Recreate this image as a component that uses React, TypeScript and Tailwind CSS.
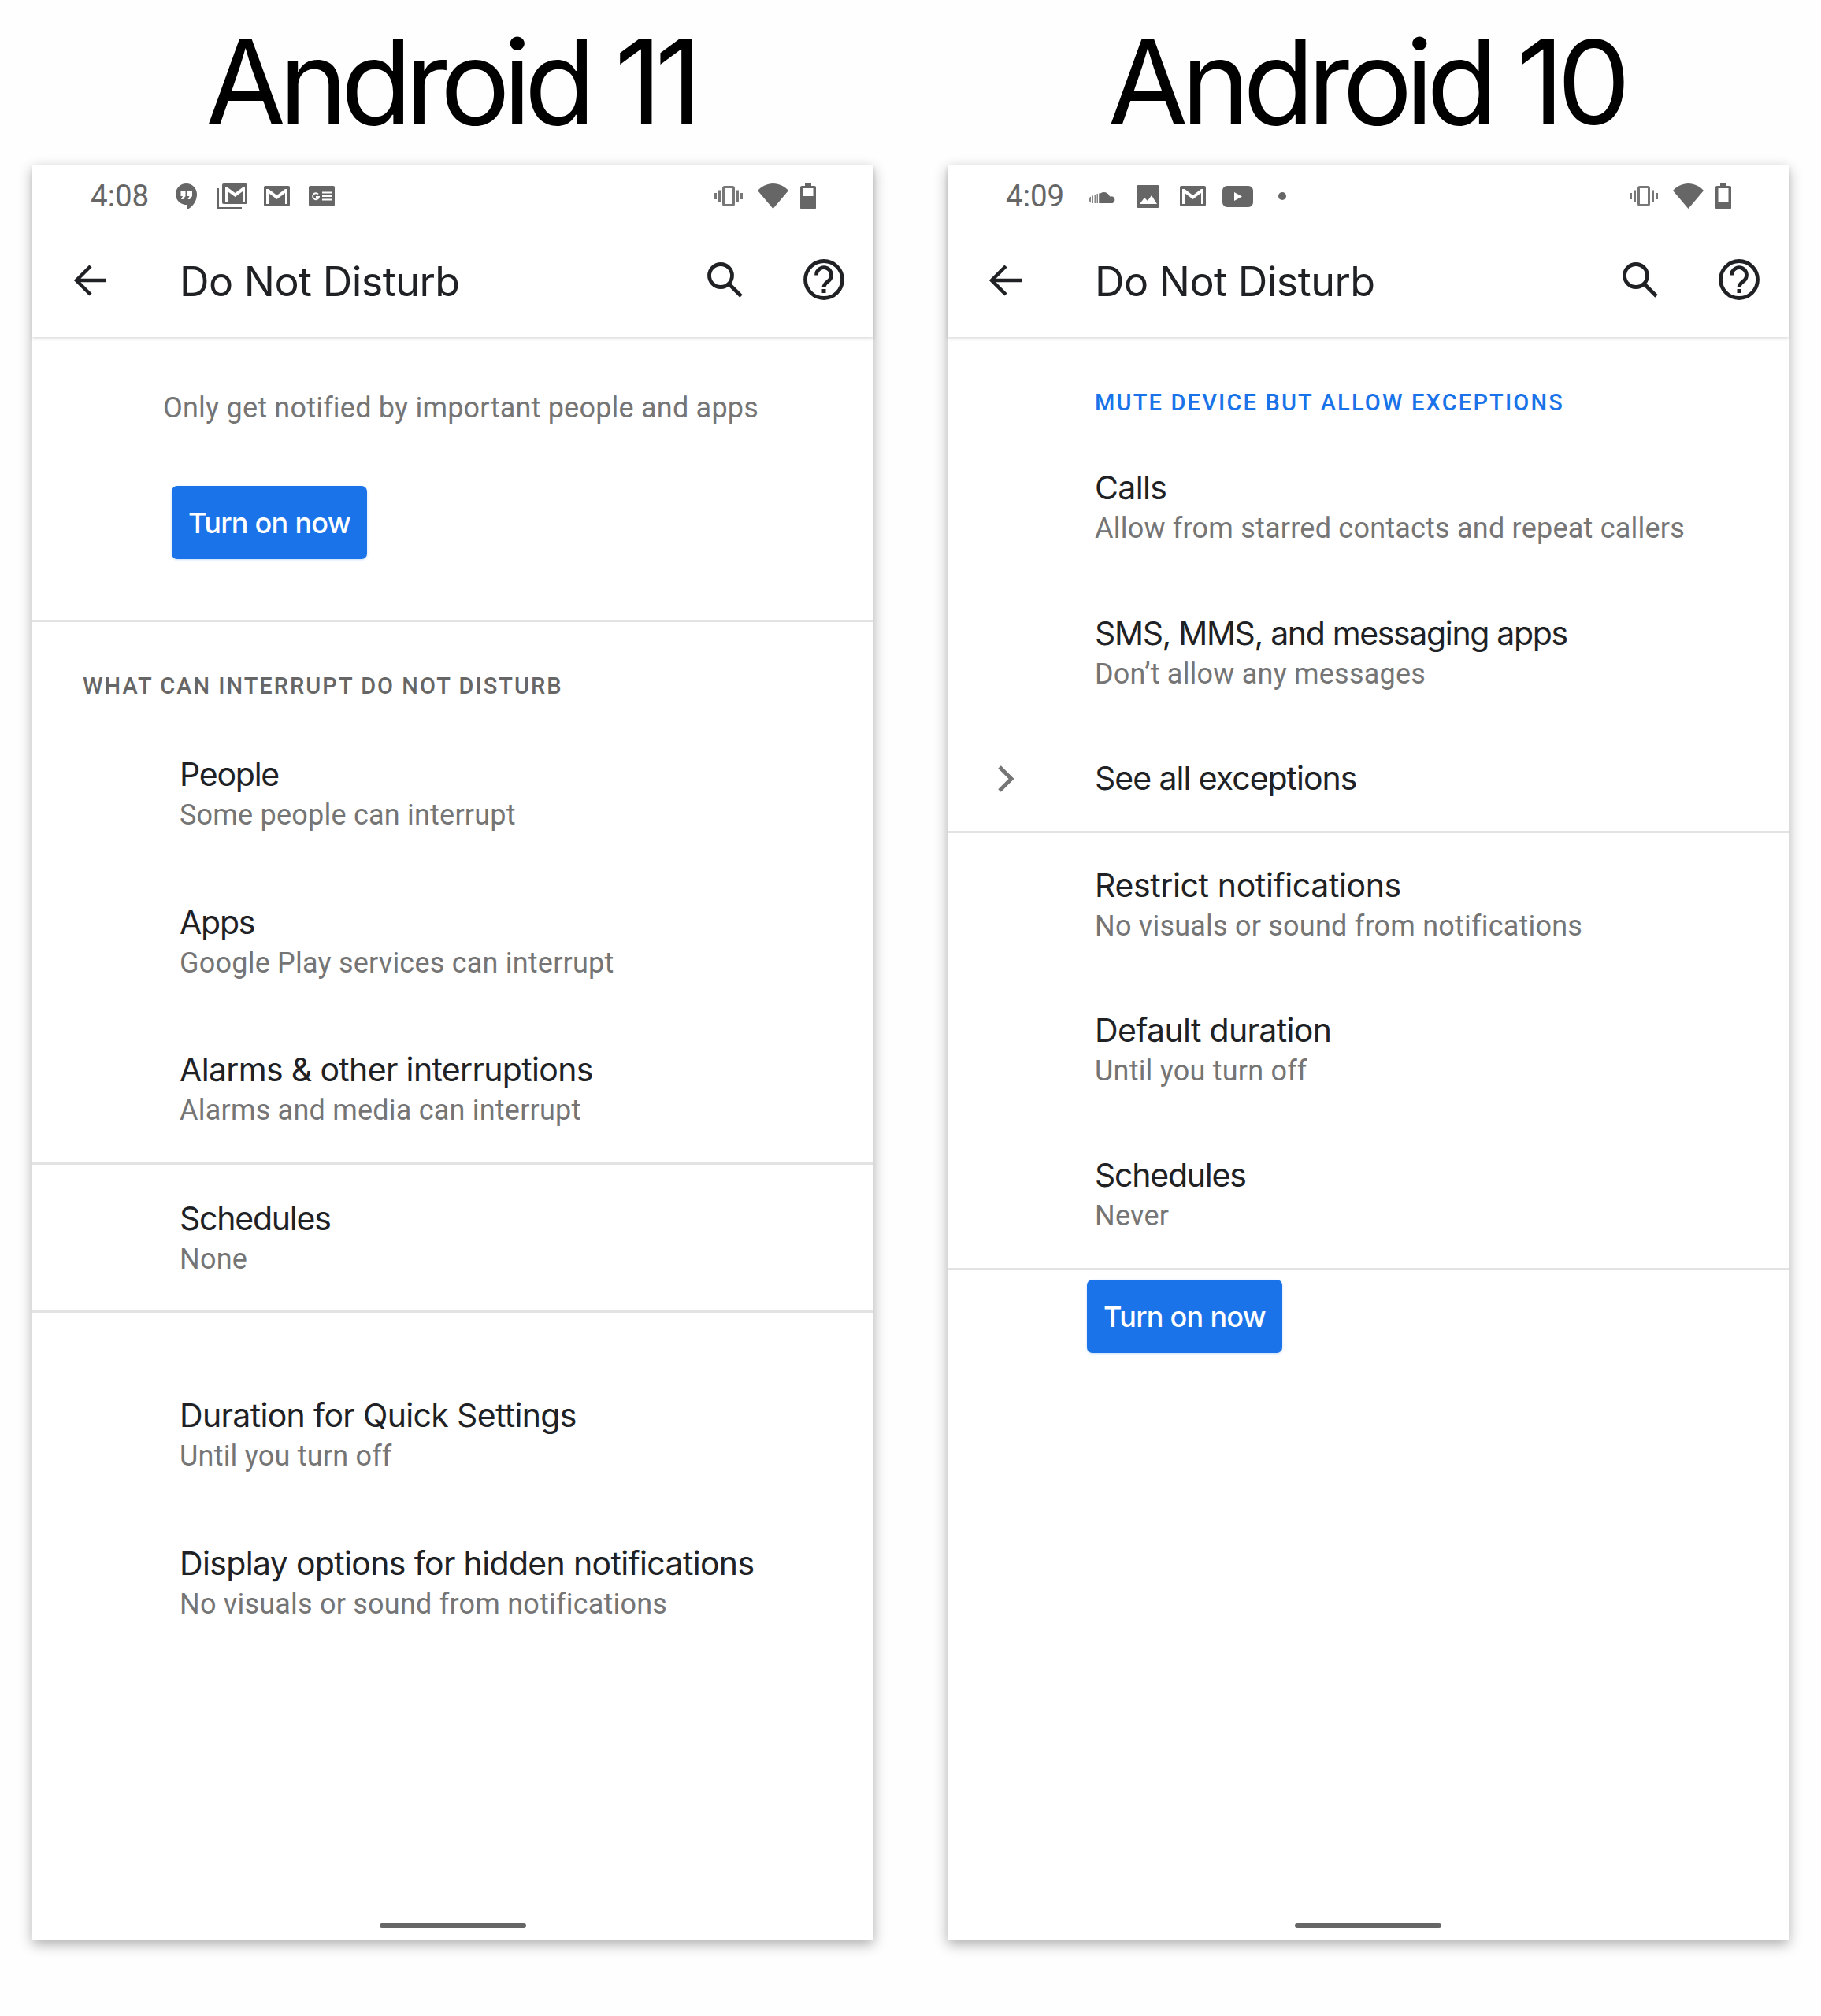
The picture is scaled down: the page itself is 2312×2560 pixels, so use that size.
const SANS = 'font-["Inter",sans-serif]';

function Hangouts() {
  return (
    <svg width="27" height="33" viewBox="0 0 27 33" fill="#666">
      <path d="M13.5 0C6 0 0 6 0 13.5S6 27 13.5 27H15v6c7-3.500 12-11 12-19.500C27 6 21 0 13.500 0z" />
      <path d="M6.500 10h6v6l-3 4H7l2-4H6.500zM15 10h6v6l-3 4h-2.500l2-4H15z" fill="#fff" />
    </svg>
  );
}

function GmailStack() {
  return (
    <svg width="39" height="33" viewBox="0 0 39 33" fill="#666">
      <path d="M0 6h3v24h29v3H2a2 2 0 0 1-2-2z" />
      <rect x="7" y="0" width="32" height="26" rx="2" />
      <path d="M11 23V5h3l9.500 7L33 5h3v18h-3V10l-9.500 7L14 10v13z" fill="#fff" />
    </svg>
  );
}

function Gmail() {
  return (
    <svg width="33" height="26" viewBox="0 0 33 26" fill="#666">
      <rect width="33" height="26" rx="2" />
      <path d="M3 23V4h3l10.500 8L27 4h3v19h-3V9l-10.500 8L6 9v14z" fill="#fff" />
    </svg>
  );
}

function GNews() {
  return (
    <svg width="33" height="26" viewBox="0 0 33 26" fill="#666">
      <rect width="33" height="26" rx="2" />
      <path d="M12 10.500a4 4 0 1 0 1 3.500H9" fill="none" stroke="#fff" strokeWidth="1.800" />
      <path d="M17 8.500h12M17 13h12M17 17.500h12" stroke="#fff" strokeWidth="2" />
    </svg>
  );
}

function SoundCloud() {
  return (
    <svg width="34" height="16" viewBox="0 0 34 16" fill="#666">
      <path d="M14 16V3.500a8 8 0 0 1 4-1.500 8.500 8.500 0 0 1 8 5.500 4.300 4.300 0 1 1 3.500 8.500z" />
      <path d="M0 10.500a3 3 0 0 1 2-3v8a3 3 0 0 1-2-3zM3.500 6.500h1.500V16H3.500zM6.500 5.500H8V16H6.500zM9.500 4h1.500v12H9.500zM12 3.500h1.200V16H12z" opacity="0.8" />
    </svg>
  );
}

function ImageIcon() {
  return (
    <svg width="29" height="29" viewBox="0 0 29 29" fill="#666">
      <rect width="29" height="29" rx="2" />
      <path d="M4 24l6-8 4 4 5-7 7 11z" fill="#fff" />
    </svg>
  );
}

function YouTube() {
  return (
    <svg width="39" height="27" viewBox="0 0 39 27" fill="#666">
      <rect width="39" height="27" rx="6" />
      <path d="M15 8l10 5.500L15 19z" fill="#fff" />
    </svg>
  );
}

function Vibrate() {
  return (
    <svg width="36" height="26" viewBox="0 0 36 26" fill="#777">
      <path d="M0 9h3v8H0zM5 5.500h3v15H5zM28 5.500h3v15h-3zM33 9h3v8h-3z" />
      <rect x="11.500" y="1.500" width="13" height="23" rx="1.500" fill="none" stroke="#777" strokeWidth="3" />
    </svg>
  );
}

function Wifi() {
  return (
    <svg width="39" height="32" viewBox="0 0 39 32" fill="#666">
      <path d="M19.500 32L0 9C5 3.500 12 0 19.500 0S34 3.500 39 9z" />
    </svg>
  );
}

function Battery({ level }: { level: number }) {
  // level = hauteur de la partie vide, en px
  return (
    <svg width="20" height="33" viewBox="0 0 20 33" fill="#666">
      <path d="M6 0h8v3h4a2 2 0 0 1 2 2v26a2 2 0 0 1-2 2H2a2 2 0 0 1-2-2V5a2 2 0 0 1 2-2h4z" />
      <rect x="3.500" y="6" width="13" height={level} fill="#fff" />
    </svg>
  );
}

function Back() {
  return (
    <svg width="42" height="42" viewBox="0 0 42 42" fill="none" stroke="#202124" strokeWidth="4.500">
      <path d="M42 21H4M22 3L4 21l18 18" />
    </svg>
  );
}

function Search() {
  return (
    <svg width="45" height="45" viewBox="0 0 45 45" fill="none" stroke="#202124" strokeWidth="4.800">
      <circle cx="17" cy="17" r="14.500" />
      <path d="M27 27l16 16" />
    </svg>
  );
}

function Help() {
  return (
    <svg width="52" height="52" viewBox="0 0 52 52" fill="none" stroke="#202124" strokeWidth="4.800">
      <circle cx="26" cy="26" r="23.500" />
      <path d="M16.500 20.500a9.500 9.500 0 1 1 15 7.500c-3 2.300-5.500 4-5.500 8" />
      <path d="M23.500 38h5v5h-5z" fill="#202124" stroke="none" />
    </svg>
  );
}

function Chevron() {
  return (
    <svg width="22" height="34" viewBox="0 0 22 34" fill="none" stroke="#757575" strokeWidth="5">
      <path d="M3 2l15 15L3 32" />
    </svg>
  );
}

function Row({ title, sub, h = 'h-[188px]', track = 'tracking-[-0.016em]' }: { title: string; sub: string; h?: string; track?: string }) {
  return (
    <div className={`${h} flex flex-col justify-center pl-[187px]`}>
      <p className={`${SANS} ${track} text-[41px] leading-[52px] text-[#202124]`}>{title}</p>
      <p className="font-['Roboto',sans-serif] text-[36px] leading-[52px] tracking-[0.006em] text-[#757575]">{sub}</p>
    </div>
  );
}

function TurnOn() {
  return (
    <button
      type="button"
      className={`${SANS} flex h-[93px] w-[248px] items-center justify-center rounded-[7px] bg-[#1a73e8] text-[36px] font-medium tracking-[-0.02em] text-white shadow-[0_1px_3px_rgba(26,115,232,0.25)]`}
    >
      Turn on now
    </button>
  );
}

function Phone({ label, time, icons, level, children }: { label: string; time: string; icons: React.ReactNode; level: number; children: React.ReactNode }) {
  return (
    <div className="flex w-[1068px] flex-col">
      <h1 className={`${SANS} flex h-[210px] items-center justify-center pr-[6px] text-[148px] leading-none tracking-[-0.06em] text-black`}>{label}</h1>
      <div className="flex h-[2254px] flex-col bg-white shadow-[0_5px_16px_rgba(0,0,0,0.32)]">
        <div className="flex h-[218px] flex-col shadow-[0_2px_4px_rgba(0,0,0,0.14)]">
          <div className="flex h-[76px] items-center pt-[2px] pl-[74px] pr-[73px]">
            <span className="w-[77px] font-['Roboto',sans-serif] text-[38.5px] text-[#666]">{time}</span>
            {icons}
            <div className="ml-auto flex items-center gap-[19px]">
              <Vibrate />
              <Wifi />
              <div className="-ml-[4px]"><Battery level={level} /></div>
            </div>
          </div>
          <div className="flex flex-1 items-center pl-[52px] pr-[37px]">
            <div className="mb-[2px]"><Back /></div>
            <span className={`${SANS} mt-[2px] ml-[93px] text-[52px] tracking-[-0.01em] text-[#202124]`}>Do Not Disturb</span>
            <div className="mb-[4px] ml-auto"><Search /></div>
            <div className="mb-[4px] ml-[77px]"><Help /></div>
          </div>
        </div>
        {children}
        <div className="mt-auto mb-[16px] h-[6px] w-[186px] self-center rounded-full bg-[#666]" />
      </div>
    </div>
  );
}

export default function App() {
  return (
    <div className="flex h-[2560px] gap-[94px] bg-[#fefefe] pl-[41px]">
      <Phone
        label="Android 11"
        time="4:08"
        level={10}
        icons={
          <div className="flex items-center">
            <div className="ml-[31px]"><Hangouts /></div>
            <div className="ml-[25px]"><GmailStack /></div>
            <div className="ml-[21px]"><Gmail /></div>
            <div className="ml-[24px]"><GNews /></div>
          </div>
        }
      >
        <div className="h-[362px] border-b-[3px] border-[#e3e3e3] pl-[166px] pt-[66px]">
          <p className="font-['Roboto',sans-serif] text-[36px] leading-[48px] tracking-[0.006em] text-[#757575]">
            Only get notified by important people and apps
          </p>
          <div className="ml-[11px] mt-[75px]"><TurnOn /></div>
        </div>
        <div className="border-b-[3px] border-[#e3e3e3]">
          <div className="mb-[26px] pl-[64px] pt-[63px] font-['Roboto',sans-serif] text-[29px] leading-[36px] font-medium tracking-[0.07em] text-[#666]">
            WHAT CAN INTERRUPT DO NOT DISTURB
          </div>
          <Row title="People" sub="Some people can interrupt" track="tracking-[-0.03em]" />
          <Row title="Apps" sub="Google Play services can interrupt" track="tracking-[-0.03em]" />
          <Row title="Alarms & other interruptions" sub="Alarms and media can interrupt" h="h-[185px]" />
        </div>
        <div className="border-b-[3px] border-[#e3e3e3]">
          <Row title="Schedules" sub="None" h="h-[185px] pt-[2px]" track="tracking-[-0.03em]" />
        </div>
        <div className="pt-[62px]">
          <Row title="Duration for Quick Settings" sub="Until you turn off" />
          <Row title="Display options for hidden notifications" sub="No visuals or sound from notifications" />
        </div>
      </Phone>

      <Phone
        label="Android 10"
        time="4:09"
        level={18}
        icons={
          <div className="flex items-center">
            <div className="ml-[29px] mt-[2px]"><SoundCloud /></div>
            <div className="ml-[26px]"><ImageIcon /></div>
            <div className="ml-[26px]"><Gmail /></div>
            <div className="ml-[21px]"><YouTube /></div>
            <div className="ml-[32px] h-[10px] w-[10px] rounded-full bg-[#666]" />
          </div>
        }
      >
        <div className="border-b-[3px] border-[#e3e3e3]">
          <div className="mb-[23px] pl-[187px] pt-[65px] font-['Roboto',sans-serif] text-[29px] leading-[36px] font-medium tracking-[0.075em] text-[#1a73e8]">
            MUTE DEVICE BUT ALLOW EXCEPTIONS
          </div>
          <Row title="Calls" sub="Allow from starred contacts and repeat callers" h="h-[185px]" />
          <Row title="SMS, MMS, and messaging apps" sub="Don’t allow any messages" h="h-[185px]" track="tracking-[-0.033em]" />
          <div className="flex h-[133px] items-center pl-[63px]">
            <Chevron />
            <span className={`${SANS} ml-[102px] text-[41px] tracking-[-0.025em] text-[#202124]`}>See all exceptions</span>
          </div>
        </div>
        <div className="border-b-[3px] border-[#e3e3e3]">
          <Row title="Restrict notifications" sub="No visuals or sound from notifications" h="h-[184px]" track="tracking-[-0.009em]" />
          <Row title="Default duration" sub="Until you turn off" h="h-[184px]" />
          <Row title="Schedules" sub="Never" h="h-[184px]" track="tracking-[-0.03em]" />
        </div>
        <div className="pl-[177px] pt-[12px]"><TurnOn /></div>
      </Phone>
    </div>
  );
}
